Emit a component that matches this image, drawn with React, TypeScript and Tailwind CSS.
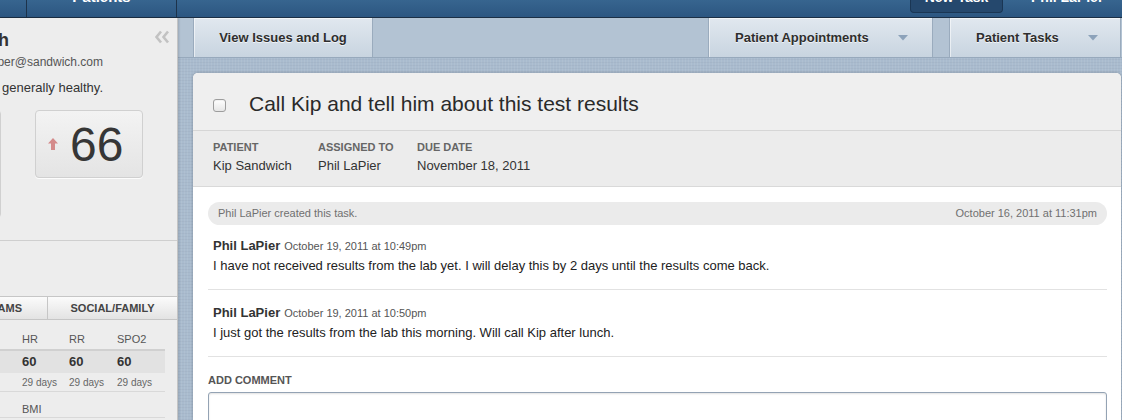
import { useState } from 'react';

const vitals = [
  { label: 'HR', value: '60', age: '29 days' },
  { label: 'RR', value: '60', age: '29 days' },
  { label: 'SPO2', value: '60', age: '29 days' },
];

const comments = [
  {
    author: 'Phil LaPier',
    date: 'October 19, 2011 at 10:49pm',
    body: 'I have not received results from the lab yet. I will delay this by 2 days until the results come back.',
  },
  {
    author: 'Phil LaPier',
    date: 'October 19, 2011 at 10:50pm',
    body: 'I just got the results from the lab this morning. Will call Kip after lunch.',
  },
];

const texture =
  'bg-[#a9bbce] bg-[image:repeating-linear-gradient(90deg,rgba(255,255,255,0.07)_0px,rgba(255,255,255,0.07)_1px,transparent_1px,transparent_3px),repeating-linear-gradient(0deg,rgba(0,0,0,0.03)_0px,rgba(0,0,0,0.03)_1px,transparent_1px,transparent_3px)]';

const TabArrow = () => (
  <svg width="10" height="6" viewBox="0 0 10 6" className="shrink-0">
    <path d="M0 0 L10 0 L5 5.5 Z" fill="#8ca2ba" />
  </svg>
);

const TopNav = () => (
  <div className="h-[18px] flex bg-linear-to-b from-[#37658f] to-[#2c5681] border-b border-[#1b2f45] overflow-hidden text-white font-bold text-[15px]">
    <div className="w-[27px] border-r border-[#1d334b]" />
    <div className="w-[150px] border-r border-[#1d334b] flex justify-center">
      <span className="leading-[18px] -mt-[12px]">Patients</span>
    </div>
    <div className="flex-1" />
    <div className="w-[93px] h-[13px] bg-[#25486d] border border-t-0 border-[#1a3654] rounded-b-[4px] flex justify-center">
      <span className="leading-[18px] -mt-[12px] text-[14px]">New Task</span>
    </div>
    <div className="w-[119px] pl-[28px]">
      <span className="leading-[18px] -mt-[12px] block text-[14px]">Phil LaPier</span>
    </div>
  </div>
);

const PatientPanel = () => (
  <div className="w-[178px] shrink-0 bg-[#ededed] border-r border-[#c4c4c4] overflow-hidden shadow-[1px_0_2px_rgba(0,0,0,0.15)] z-10">
    <div className="flex items-start pt-[12px]">
      <div className="w-[9px] flex justify-end whitespace-nowrap text-[18px] leading-[20px] font-bold text-[#333]">
        Kip Sandwich
      </div>
      <svg width="16" height="14" viewBox="0 0 16 14" className="ml-auto mr-[7px]">
        <path d="M7 1.5 L2.5 7 L7 12.5 M14 1.5 L9.5 7 L14 12.5" fill="none" stroke="#c2c2c2" strokeWidth="2.6" />
      </svg>
    </div>
    <div className="mt-[4px] w-[103px] flex justify-end whitespace-nowrap text-[12px] leading-[16px] text-[#555]">
      kip.hopper@sandwich.com
    </div>
    <div className="mt-[10px] w-[103px] flex justify-end whitespace-nowrap text-[13px] leading-[16px] text-[#333]">
      Patient is generally healthy.
    </div>
    <div className="mt-[14px] flex items-start">
      <div className="-ml-[39px] w-[40px] h-[108px] border border-[#d0d0d0] rounded-[4px] bg-[#eeeeee]" />
      <div className="ml-[34px] w-[108px] h-[68px] border border-[#d0d0d0] rounded-[4px] bg-linear-to-b from-[#f3f3f3] to-[#e4e4e4] flex items-center shadow-[0_1px_0_rgba(255,255,255,0.8)]">
        <svg width="10" height="12" viewBox="0 0 10 12" className="ml-[12px]">
          <path d="M5 0 L10 5.5 L7 5.5 L7 12 L3 12 L3 5.5 L0 5.5 Z" fill="#d48a8a" />
        </svg>
        <span className="ml-[12px] mt-[2px] text-[48px] leading-[48px] text-[#363636]">66</span>
      </div>
    </div>
    <div className="mt-[22px] border-t border-[#cfcfcf]" />
    <div className="mt-[55px] h-[24px] flex border-y border-[#c6c6c6] bg-linear-to-b from-[#fbfbfb] to-[#e3e3e3] text-[11px] font-bold text-[#444]">
      <div className="w-[48px] border-r border-[#c6c6c6] flex items-center justify-end pr-[25px] whitespace-nowrap">
        EXAMS
      </div>
      <div className="flex-1 flex items-center justify-center">SOCIAL/FAMILY</div>
    </div>
    <div className="w-[165px]">
      <div className="mt-[12px] grid grid-cols-[47px_48px_48px] pl-[22px] pb-[3px] border-b-2 border-[#d0d0d0] text-[11px] leading-[14px] text-[#555]">
        {vitals.map((v) => (
          <div key={v.label}>{v.label}</div>
        ))}
      </div>
      <div className="grid grid-cols-[47px_48px_48px] pl-[22px] h-[22px] bg-[#e2e2e2] text-[13px] leading-[22px] font-bold text-[#333]">
        {vitals.map((v) => (
          <div key={v.label}>{v.value}</div>
        ))}
      </div>
      <div className="grid grid-cols-[47px_48px_48px] pl-[22px] h-[19px] border-b border-[#d9d9d9] text-[10px] leading-[20px] text-[#666]">
        {vitals.map((v) => (
          <div key={v.label}>{v.age}</div>
        ))}
      </div>
      <div className="mt-[10px] pl-[22px] pb-[1px] border-b border-[#d9d9d9] text-[11px] leading-[14px] text-[#555]">
        BMI
      </div>
    </div>
  </div>
);

const TabBar = () => {
  const tab =
    'h-full flex items-center bg-linear-to-b from-[#e1e8ef] to-[#c8d4e0] border-x border-[#9aabbd] shadow-[inset_1px_1px_0_rgba(255,255,255,0.55)] text-[13px] font-bold text-[#2e2e2e] [text-shadow:0_1px_0_rgba(255,255,255,0.7)]';
  return (
    <div className="h-[40px] shrink-0 flex pl-[15px] pr-[1px] bg-[#b3c3d3] border-b border-[#97a9bc]">
      <div className={`${tab} w-[180px] justify-center`}>View Issues and Log</div>
      <div className="flex-1" />
      <div className={`${tab} w-[225px] pl-[26px] pr-[24px] justify-between`}>
        <span>Patient Appointments</span>
        <TabArrow />
      </div>
      <div className="w-[16px]" />
      <div className={`${tab} w-[172px] pl-[26px] pr-[22px] justify-between`}>
        <span>Patient Tasks</span>
        <TabArrow />
      </div>
    </div>
  );
};

const TaskCard = () => {
  const [done, setDone] = useState(false);
  return (
    <div className="ml-[15px] mr-[1px] mt-[15px] flex-1 bg-white rounded-t-[5px] overflow-hidden shadow-[0_0_3px_rgba(0,0,0,0.25)]">
      <div className="h-[58px] bg-[#efefef] border-b border-[#d6d6d6] flex items-start pt-[19px] pl-[20px]">
        <button
          onClick={() => setDone(!done)}
          className="mt-[7px] w-[13px] h-[13px] border border-[#9d9d9d] rounded-[3px] bg-linear-to-b from-white to-[#e6e6e6] shadow-[inset_0_1px_1px_rgba(0,0,0,0.06)]"
        />
        <h1 className="ml-[23px] text-[21px] leading-[24px] text-[#2a2a2a]">
          Call Kip and tell him about this test results
        </h1>
      </div>
      <div className="h-[56px] bg-[#ececec] border-b border-[#d9d9d9] flex pt-[9px] pl-[20px]">
        <div className="w-[105px]">
          <div className="text-[11px] leading-[14px] font-bold text-[#666]">PATIENT</div>
          <div className="mt-[4px] text-[13px] leading-[16px] text-[#333]">Kip Sandwich</div>
        </div>
        <div className="w-[99px]">
          <div className="text-[11px] leading-[14px] font-bold text-[#666]">ASSIGNED TO</div>
          <div className="mt-[4px] text-[13px] leading-[16px] text-[#333]">Phil LaPier</div>
        </div>
        <div>
          <div className="text-[11px] leading-[14px] font-bold text-[#666]">DUE DATE</div>
          <div className="mt-[4px] text-[13px] leading-[16px] text-[#333]">November 18, 2011</div>
        </div>
      </div>
      <div className="pt-[15px] pl-[15px] pr-[14px]">
        <div className="h-[23px] rounded-full bg-[#ebebeb] px-[10px] flex items-center justify-between text-[11px] text-[#707070]">
          <span>Phil LaPier created this task.</span>
          <span>October 16, 2011 at 11:31pm</span>
        </div>
        {comments.map((c, i) => (
          <div key={i} className={`${i === 0 ? 'pt-[12px]' : 'pt-[14px]'} pb-[15px] pl-[5px] border-b border-[#e2e2e2]`}>
            <div className="leading-[16px]">
              <span className="text-[13px] font-bold text-[#333]">{c.author}</span>
              <span className="ml-[4px] text-[11px] text-[#555]">{c.date}</span>
            </div>
            <div className="mt-[4px] text-[13px] leading-[16px] text-[#222]">{c.body}</div>
          </div>
        ))}
        <div className="mt-[16px] text-[11px] leading-[14px] font-bold text-[#555]">ADD COMMENT</div>
        <textarea className="mt-[5px] block w-full h-[60px] border border-[#94a3b4] rounded-[3px] bg-white shadow-[inset_0_1px_2px_rgba(0,0,0,0.12)] resize-none outline-none" />
      </div>
    </div>
  );
};

export default function App() {
  return (
    <div className="w-[1122px] h-[420px] overflow-hidden flex flex-col font-['Liberation_Sans',Arial,sans-serif]">
      <TopNav />
      <div className="flex flex-1 min-h-0">
        <PatientPanel />
        <div className={`flex-1 flex flex-col min-w-0 ${texture}`}>
          <TabBar />
          <TaskCard />
        </div>
      </div>
    </div>
  );
}
